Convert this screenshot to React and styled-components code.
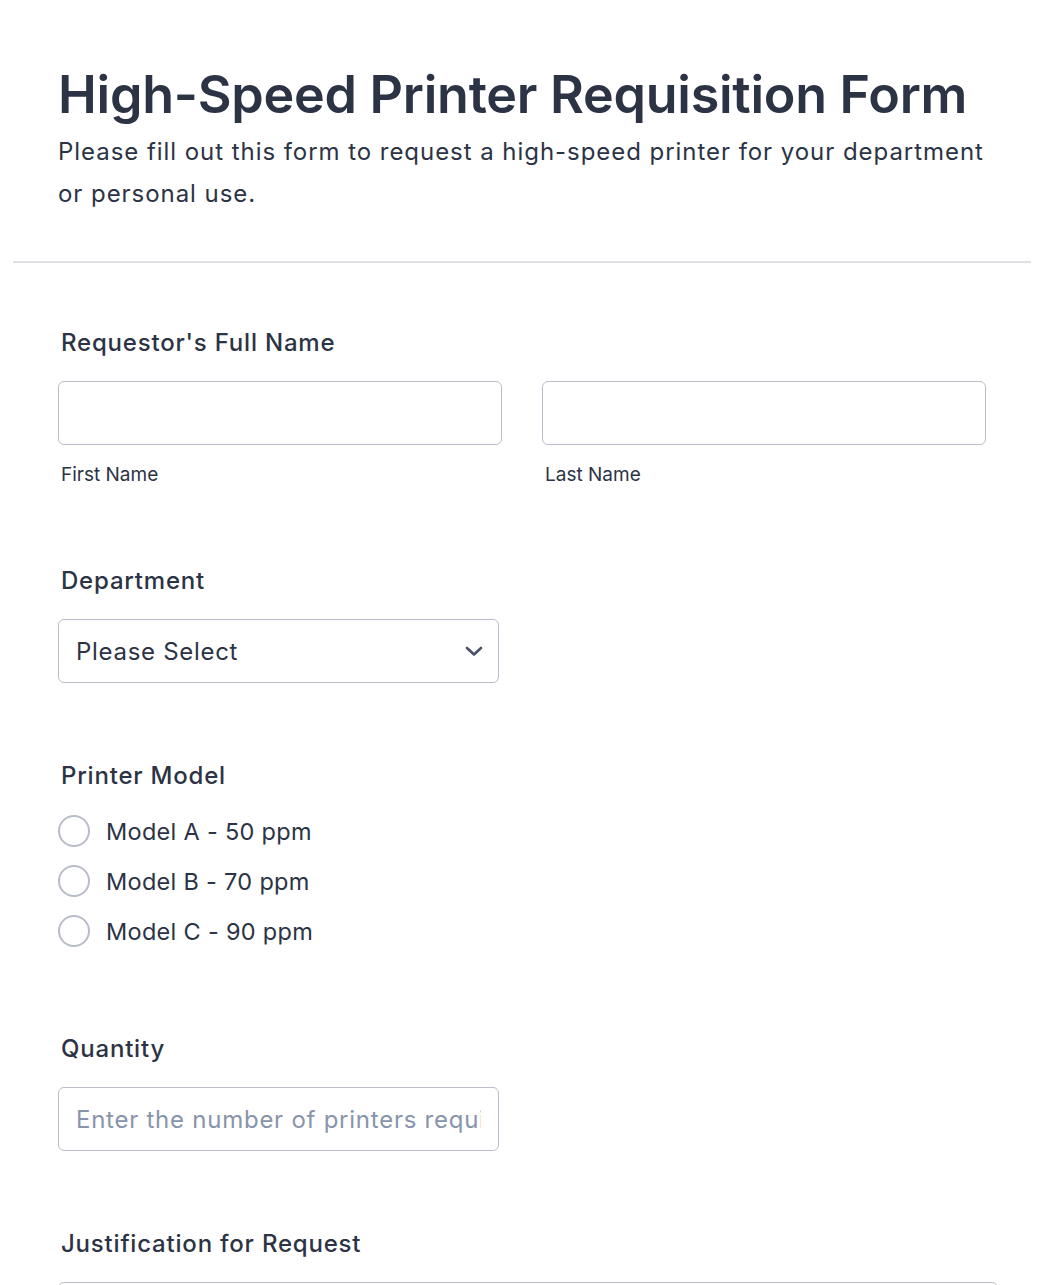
import styled, { createGlobalStyle } from "styled-components";

const GlobalStyle = createGlobalStyle`
  body {
    margin: 0;
    background: #fff;
    font-family: Inter, "Noto Sans", sans-serif;
    color: #2c3345;
  }
  * { box-sizing: border-box; }
`;

const Page = styled.div`
  padding: 0 13px;
`;

const Header = styled.header`
  padding: 58px 45px 46px;
  border-bottom: 2px solid #e0e1e8;
`;

const Title = styled.h1`
  margin: 0;
  font-size: 52px;
  line-height: 73px;
  font-weight: 600;
  letter-spacing: -0.25px;
`;

const Subtitle = styled.p`
  margin: 0;
  font-size: 24px;
  line-height: 42px;
  font-weight: 400;
  letter-spacing: 0.95px;
`;

const Form = styled.form`
  padding: 25px 45px 0;
`;

const Field = styled.div`
  padding: 38px 0;
`;

const Label = styled.label`
  display: block;
  padding-left: 3px;
  font-size: 24px;
  line-height: 34px;
  font-weight: 500;
  letter-spacing: 0.8px;
  margin-bottom: ${(p) => (p.$tight ? "13px" : "21px")};
`;

const NameRow = styled.div`
  display: grid;
  grid-template-columns: 1fr 1fr;
  gap: 40px;
`;

const Input = styled.input`
  display: block;
  width: ${(p) => p.$width || "100%"};
  height: 64px;
  border: 1.5px solid #b8bdc9;
  border-radius: 6px;
  padding: 0 17px;
  font-family: inherit;
  font-size: 24px;
  letter-spacing: 0.75px;
  color: #2c3345;
  background: #fff;
  outline: none;
  &::placeholder {
    color: #8894ab;
  }
`;

const SubLabel = styled.span`
  display: block;
  margin-top: 16px;
  padding-left: 3px;
  font-size: 19px;
  line-height: 27px;
`;

const SelectBox = styled.div`
  display: flex;
  align-items: center;
  justify-content: space-between;
  width: 441px;
  height: 64px;
  border: 1.5px solid #b8bdc9;
  border-radius: 6px;
  padding: 0 15px 0 17px;
  font-size: 24px;
  letter-spacing: 0.7px;
`;

const RadioList = styled.div`
  display: flex;
  flex-direction: column;
`;

const RadioRow = styled.label`
  display: flex;
  align-items: center;
  gap: 16px;
  height: 50px;
  font-size: 23.5px;
  letter-spacing: 0.3px;
`;

const Circle = styled.span`
  width: 32px;
  height: 32px;
  border: 2px solid #b8bdc9;
  border-radius: 50%;
  flex-shrink: 0;
`;

const TextArea = styled.textarea`
  display: block;
  width: calc(100% + 12px);
  height: 160px;
  border: 1.5px solid #b8bdc9;
  border-radius: 6px;
  resize: none;
  font-family: inherit;
`;

const Chevron = () => (
  <svg width="18" height="12" viewBox="0 0 18 12" fill="none">
    <path d="M2 3l7 6.5L16 3" stroke="#4a5266" strokeWidth="2.6" strokeLinecap="round" strokeLinejoin="round" />
  </svg>
);

const models = ["Model A - 50 ppm", "Model B - 70 ppm", "Model C - 90 ppm"];

export default function App() {
  return (
    <Page>
      <GlobalStyle />
      <Header>
        <Title>High-Speed Printer Requisition Form</Title>
        <Subtitle>
          Please fill out this form to request a high-speed printer for your department or personal use.
        </Subtitle>
      </Header>
      <Form>
        <Field>
          <Label>Requestor's Full Name</Label>
          <NameRow>
            <div>
              <Input />
              <SubLabel>First Name</SubLabel>
            </div>
            <div>
              <Input />
              <SubLabel>Last Name</SubLabel>
            </div>
          </NameRow>
        </Field>
        <Field>
          <Label>Department</Label>
          <SelectBox>
            <span>Please Select</span>
            <Chevron />
          </SelectBox>
        </Field>
        <Field>
          <Label $tight>Printer Model</Label>
          <RadioList>
            {models.map((m) => (
              <RadioRow key={m}>
                <Circle />
                {m}
              </RadioRow>
            ))}
          </RadioList>
        </Field>
        <Field>
          <Label>Quantity</Label>
          <Input $width="441px" placeholder="Enter the number of printers required" />
        </Field>
        <Field>
          <Label>Justification for Request</Label>
          <TextArea />
        </Field>
      </Form>
    </Page>
  );
}
